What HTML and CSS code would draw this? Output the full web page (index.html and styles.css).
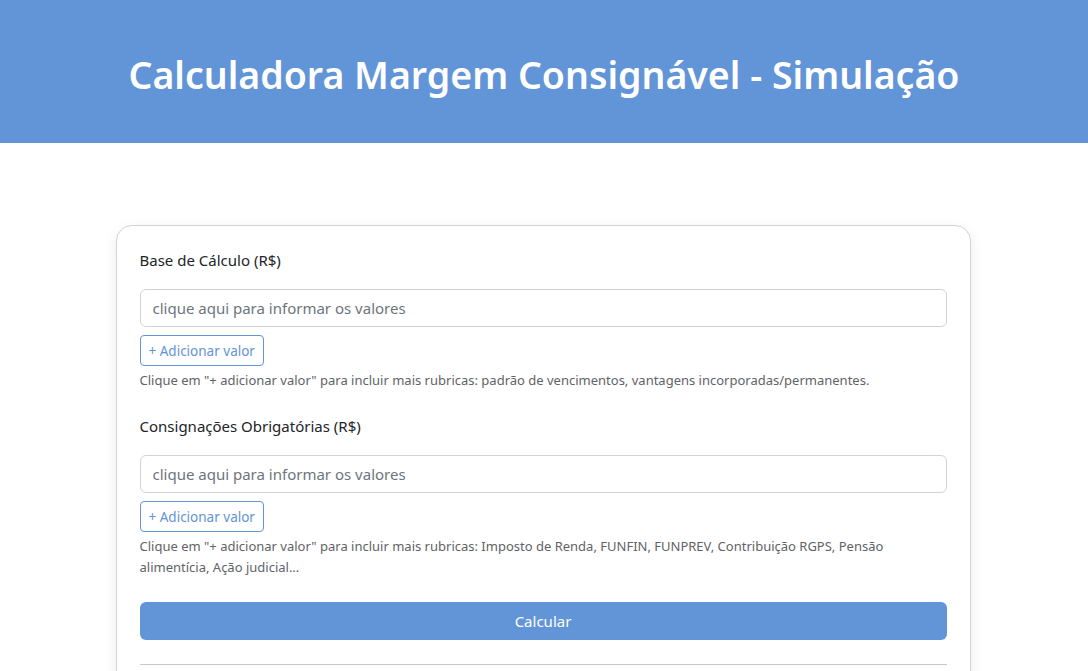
FILE: index.html
```html
<!DOCTYPE html>
<html lang="pt-BR">
<head>
<meta charset="utf-8">
<title>Calculadora Margem Consignável</title>
<link rel="stylesheet" href="styles.css">
</head>
<body>
<header class="topbar">
  <h1 class="title">Calculadora Margem Consignável - Simulação</h1>
</header>
<main class="page">
  <section class="card">
    <div class="field">
      <label class="label">Base de Cálculo (R$)</label>
      <input class="input" type="text" placeholder="clique aqui para informar os valores">
      <button class="add-btn" type="button">+ Adicionar valor</button>
      <p class="help">Clique em "+ adicionar valor" para incluir mais rubricas: padrão de vencimentos, vantagens incorporadas/permanentes.</p>
    </div>
    <div class="field">
      <label class="label">Consignações Obrigatórias (R$)</label>
      <input class="input" type="text" placeholder="clique aqui para informar os valores">
      <button class="add-btn" type="button">+ Adicionar valor</button>
      <p class="help">Clique em "+ adicionar valor" para incluir mais rubricas: Imposto de Renda, FUNFIN, FUNPREV, Contribuição RGPS, Pensão alimentícia, Ação judicial...</p>
    </div>
    <button class="calc-btn" type="button">Calcular</button>
    <hr class="divider">
  </section>
</main>
</body>
</html>
```
FILE: styles.css
```css
* { box-sizing: border-box; }
html, body { margin: 0; padding: 0; }
body {
  font-family: "Noto Sans", "Open Sans", sans-serif;
  background: #ffffff;
  color: #212529;
}
.topbar {
  background: #6294d8;
  height: 143px;
  padding-top: 5px;
  display: flex;
  align-items: center;
  justify-content: center;
}
.title {
  margin: 0;
  color: #ffffff;
  font-size: 37.5px;
  font-weight: 600;
}
.page {
  display: flex;
  justify-content: center;
  padding-top: 82px;
  padding-right: 2px;
}
.card {
  width: 855px;
  border: 1px solid #d3d3d3;
  border-radius: 16px;
  box-shadow: 0 4px 14px rgba(0,0,0,0.08);
  padding: 23px 23px 24px;
  background: #fff;
}
.field { margin-bottom: 24px; }
.label {
  display: block;
  font-size: 15px;
  line-height: 22px;
  color: #212529;
  margin-bottom: 18px;
}
.input {
  display: block;
  width: 100%;
  height: 38px;
  border: 1px solid #ced4da;
  border-radius: 6px;
  padding: 0 12px;
  font-family: inherit;
  font-size: 15px;
  color: #212529;
  background: #fff;
}
.input::placeholder { color: #6c757d; opacity: 1; }
.add-btn {
  display: block;
  margin-top: 8px;
  height: 31px;
  padding: 0 8px;
  border: 1px solid #6294d8;
  border-radius: 4px;
  background: #fff;
  color: #6294d8;
  font-family: inherit;
  font-size: 13.5px;
}
.help {
  margin: 4px 0 0;
  font-size: 13px;
  line-height: 21px;
  color: #5f6368;
}
.calc-btn {
  display: block;
  width: 100%;
  height: 38px;
  border: none;
  border-radius: 6px;
  background: #6294d8;
  color: #ffffff;
  font-family: inherit;
  font-size: 15px;
}
.divider {
  margin: 24px 0 0;
  border: none;
  border-top: 1px solid #c8c8c8;
}
```
